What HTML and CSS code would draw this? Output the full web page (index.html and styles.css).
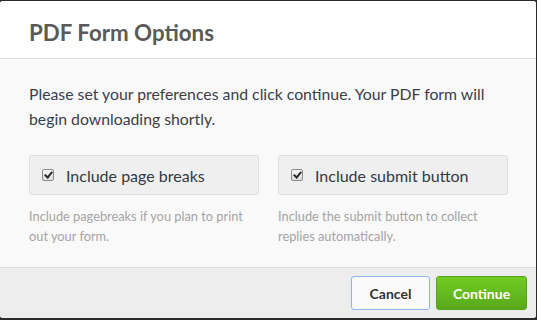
FILE: index.html
```html
<!DOCTYPE html>
<html>
<head>
<meta charset="utf-8">
<link rel="stylesheet" href="styles.css">
</head>
<body>
<div class="backdrop">
  <div class="modal">
    <div class="modal-header">
      <h1 class="title">PDF Form Options</h1>
    </div>
    <div class="modal-body">
      <p class="intro">Please set your preferences and click continue. Your PDF form will begin downloading shortly.</p>
      <div class="options">
        <div class="option">
          <label class="check-box"><input type="checkbox" checked><span>Include page breaks</span></label>
          <p class="help">Include pagebreaks if you plan to print out your form.</p>
        </div>
        <div class="option">
          <label class="check-box"><input type="checkbox" checked><span>Include submit button</span></label>
          <p class="help">Include the submit button to collect replies automatically.</p>
        </div>
      </div>
    </div>
    <div class="modal-footer">
      <button class="btn btn-cancel">Cancel</button>
      <button class="btn btn-continue">Continue</button>
    </div>
  </div>
</div>
</body>
</html>
```
FILE: styles.css
```css
html, body {
  margin: 0;
  padding: 0;
  background: #2b2b2b;
  font-family: Lato, "Open Sans", sans-serif;
}
.backdrop {
  padding: 1px 1px 2px 0;
  height: 320px;
  box-sizing: border-box;
}
.modal {
  background: #f9f9f9;
  border-radius: 3px;
  height: 317px;
  display: flex;
  flex-direction: column;
  overflow: hidden;
}
.modal-header {
  background: #fff;
  height: 57px;
  border-bottom: 1px solid #e1e1e1;
  display: flex;
  align-items: center;
  padding: 0 29px;
}
.title {
  margin: 0;
  font-size: 22.3px;
  font-weight: 700;
  color: #5a5a5a;
  padding-top: 5px;
}
.modal-body {
  flex: 1;
  padding: 22px 29px 0 29px;
}
.intro {
  margin: 0;
  font-size: 15.8px;
  line-height: 25px;
  color: #3a3f4a;
}
.options {
  display: grid;
  grid-template-columns: 230px 230px;
  column-gap: 19px;
  margin-top: 24px;
}
.check-box {
  display: flex;
  align-items: center;
  height: 38px;
  background: #efefef;
  border: 1px solid #dedede;
  border-radius: 3px;
  padding-left: 12px;
  font-size: 16px;
  color: #333a44;
}
.check-box input {
  appearance: none;
  -webkit-appearance: none;
  position: relative;
  box-sizing: border-box;
  margin: 0 12px 0 0;
  width: 12px;
  height: 12px;
  border: 1px solid #8a8a8a;
  border-radius: 2px;
  background: linear-gradient(#f4f4f4, #dedede);
}
.check-box input:checked::after {
  content: "";
  position: absolute;
  left: 3px;
  top: 0px;
  width: 3px;
  height: 6px;
  border: solid #2a2a2a;
  border-width: 0 2px 2px 0;
  transform: rotate(40deg);
}
.help {
  margin: 11px 0 0;
  font-size: 12.8px;
  line-height: 20px;
  color: #a4a4a4;
}
.modal-footer {
  height: 50px;
  border-top: 1px solid #dcdcdc;
  background: #ededed;
  display: flex;
  justify-content: flex-end;
  align-items: center;
  gap: 6px;
  padding: 0 9px 0 0;
}
.btn {
  height: 34px;
  border-radius: 3px;
  font-family: inherit;
  font-size: 14px;
  font-weight: 700;
  cursor: pointer;
}
.btn-cancel {
  width: 79px;
  background: #fafafa;
  border: 1px solid #8fb2ee;
  color: #333;
}
.btn-continue {
  width: 91px;
  background: linear-gradient(#71cc23, #58a91c);
  border: 1px solid #58a31c;
  color: #fff;
}
```
